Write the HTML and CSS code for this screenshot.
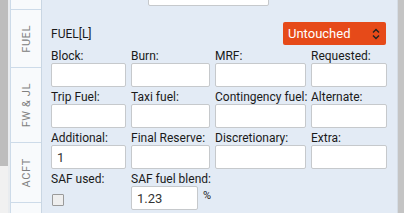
FILE: index.html
```html
<!DOCTYPE html>
<html lang="en">
<head>
    <meta charset="UTF-8">
    <meta name="viewport" content="width=device-width, initial-scale=1.0">
    <title>Fuel</title>
    <link rel="stylesheet" href="styles.css">
</head>
<body>
    <div class="frame">
        <div class="scroll"><div class="thumb"></div></div>
        <div class="tabs">
            <div class="tab tab-prev"></div>
            <div class="tab tab-fuel"><span>FUEL</span></div>
            <div class="tab tab-fw"><span>FW &amp; JL</span></div>
            <div class="tab tab-acft"><span>ACFT</span></div>
            <div class="tab tab-rest"></div>
        </div>
        <div class="panel">
            <input type="text" class="top-field">

            <div class="header">
                <span class="title">FUEL[L]</span>
                <div class="status">
                    <span>Untouched</span>
                    <svg width="8" height="12" viewBox="0 0 8 12">
                        <path d="M1 4.5 L4 1.5 L7 4.5 M1 7.5 L4 10.5 L7 7.5" fill="none" stroke="#222" stroke-width="1.4"/>
                    </svg>
                </div>
            </div>

            <div class="grid">
                <div class="field"><label>Block:</label><input type="text"></div>
                <div class="field"><label>Burn:</label><input type="text"></div>
                <div class="field"><label>MRF:</label><input type="text"></div>
                <div class="field"><label>Requested:</label><input type="text"></div>

                <div class="field"><label>Trip Fuel:</label><input type="text"></div>
                <div class="field"><label>Taxi fuel:</label><input type="text"></div>
                <div class="field"><label>Contingency fuel:</label><input type="text"></div>
                <div class="field"><label>Alternate:</label><input type="text"></div>

                <div class="field"><label>Additional:</label><input type="text" value="1"></div>
                <div class="field"><label>Final Reserve:</label><input type="text"></div>
                <div class="field"><label>Discretionary:</label><input type="text"></div>
                <div class="field"><label>Extra:</label><input type="text"></div>

                <div class="field">
                    <label>SAF used:</label>
                    <div class="check-row"><span class="check"></span></div>
                </div>
                <div class="field">
                    <label>SAF fuel blend:</label>
                    <div class="blend-row"><input type="text" class="blend" value="1.23"><span class="unit">%</span></div>
                </div>
            </div>
        </div>
        <div class="rscroll"></div>
    </div>
</body>
</html>
```

FILE: styles.css
```css
body {
    margin: 0;
    font-family: Roboto, "Liberation Sans", Arial, sans-serif;
    font-size: 12px;
    color: #1a1a1a;
    overflow: hidden;
}
.frame {
    display: flex;
    height: 213px;
    width: 404px;
}
.scroll {
    width: 8px;
    background: #f1f1f1;
    border-right: 2px solid #e9ecef;
}
.thumb {
    height: 166px;
    background: #bdbdbd;
}
.tabs {
    width: 30px;
    display: flex;
    flex-direction: column;
    background: #f8fafc;
    border-left: 1px solid #cddbe9;
    border-right: 1px solid #c9d6e3;
}
.tab {
    display: flex;
    align-items: center;
    justify-content: center;
    border-bottom: 1px solid #cddbe9;
    color: #808080;
    font-size: 11px;
    letter-spacing: 0.6px;
}
.tab span {
    writing-mode: vertical-rl;
    transform: rotate(180deg);
}
.tab-prev { height: 9px; }
.tab-fuel { height: 57px; }
.tab-fw { height: 74px; }
.tab-acft { height: 59px; }
.tab-rest { flex: 1; border-bottom: none; }
.panel {
    flex: 1;
    background: #e3ebf5;
    padding: 0 10px 0 9px;
    border-right: 1px solid #d5dde6;
}
input {
    box-sizing: border-box;
    height: 24px;
    width: 100%;
    border: 1px solid #c6c9cc;
    border-radius: 2px;
    background: #fff;
    font-family: inherit;
    font-size: 13px;
    color: #333;
    padding: 0 5px;
    margin: 0;
    outline: none;
}
.top-field {
    display: block;
    width: 121px;
    margin: -18px 0 0 97px;
}
.header {
    display: flex;
    justify-content: space-between;
    align-items: center;
    margin-top: 16px;
    height: 23px;
}
.title {
    font-size: 12px;
}
.status {
    display: flex;
    align-items: center;
    justify-content: space-between;
    box-sizing: border-box;
    width: 103px;
    height: 23px;
    margin-right: 1px;
    padding: 0 6px 0 5px;
    background: #e64a19;
    color: #fff;
    font-size: 13px;
    border-radius: 2px;
}
.grid {
    display: grid;
    grid-template-columns: 75px 79px 91px 76px;
    column-gap: 5px;
    row-gap: 3px;
    margin-top: 4px;
}
.field label {
    display: block;
    height: 14px;
    line-height: 14px;
    white-space: nowrap;
}
.check-row {
    height: 24px;
    padding-left: 1px;
}
.check {
    display: block;
    width: 10px;
    height: 10px;
    margin-top: 8px;
    border: 1px solid #9a9a9a;
    background: #eeeeee;
    border-radius: 1px;
}
.blend-row {
    display: flex;
    align-items: flex-start;
}
.blend {
    width: 67px;
}
.unit {
    margin-left: 5px;
    margin-top: 3px;
    font-size: 11px;
}
.rscroll {
    width: 6px;
    background: #c4c4c4;
}
```
